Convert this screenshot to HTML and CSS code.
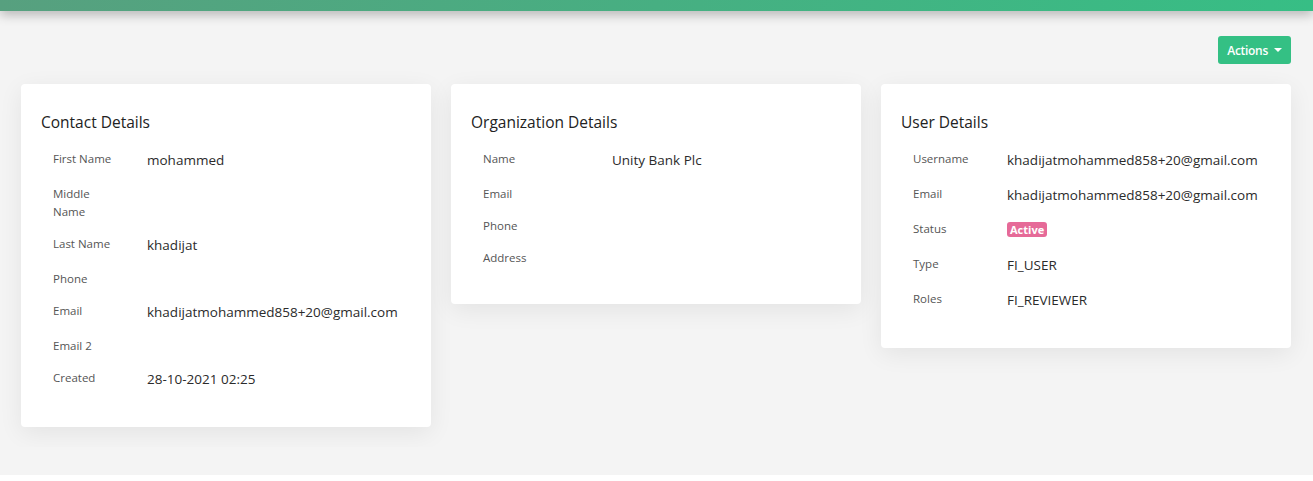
FILE: index.html
```html
<!DOCTYPE html>
<html lang="en">

<head>
    <meta charset="UTF-8" />
    <meta name="viewport" content="width=device-width, initial-scale=1.0" />
    <title>User | Details</title>
    <link rel="stylesheet" href="styles.css">
</head>

<body>

    <div class="topbar"></div>

    <div class="page">
        <div class="toolbar">
            <button class="btn-actions" type="button">Actions <span class="caret"></span></button>
        </div>

        <div class="cards">
            <div class="card">
                <h3>Contact Details</h3>
                <dl class="details">
                    <dt>First Name</dt>
                    <dd>mohammed</dd>
                    <dt>Middle Name</dt>
                    <dd class="empty"></dd>
                    <dt>Last Name</dt>
                    <dd>khadijat</dd>
                    <dt>Phone</dt>
                    <dd class="empty"></dd>
                    <dt>Email</dt>
                    <dd>khadijatmohammed858+20@gmail.com</dd>
                    <dt>Email 2</dt>
                    <dd class="empty"></dd>
                    <dt>Created</dt>
                    <dd>28-10-2021 02:25</dd>
                </dl>
            </div>

            <div class="card">
                <h3>Organization Details</h3>
                <dl class="details wide">
                    <dt>Name</dt>
                    <dd>Unity Bank Plc</dd>
                    <dt>Email</dt>
                    <dd class="empty"></dd>
                    <dt>Phone</dt>
                    <dd class="empty"></dd>
                    <dt>Address</dt>
                    <dd class="empty"></dd>
                </dl>
            </div>

            <div class="card">
                <h3>User Details</h3>
                <dl class="details">
                    <dt>Username</dt>
                    <dd>khadijatmohammed858+20@gmail.com</dd>
                    <dt>Email</dt>
                    <dd>khadijatmohammed858+20@gmail.com</dd>
                    <dt>Status</dt>
                    <dd><span class="badge">Active</span></dd>
                    <dt>Type</dt>
                    <dd>FI_USER</dd>
                    <dt>Roles</dt>
                    <dd>FI_REVIEWER</dd>
                </dl>
            </div>
        </div>
    </div>

</body>

</html>
```

FILE: styles.css
```css
* {
    box-sizing: border-box;
}

body {
    font-family: 'Open Sans', sans-serif;
    background-color: #fff;
    margin: 0;
    padding: 0;
    color: #333;
}

.topbar {
    height: 11px;
    background: linear-gradient(90deg, #57a07f, #37be85);
    box-shadow: 0 3px 12px rgba(0, 0, 0, 0.3);
    position: relative;
    z-index: 1;
}

.page {
    background-color: #f4f4f4;
    padding-top: 25px;
    padding-bottom: 28px;
}

.toolbar {
    display: flex;
    justify-content: flex-end;
    padding-right: 22px;
}

.btn-actions {
    height: 28px;
    padding: 0 9px;
    border: none;
    border-radius: 3px;
    background-color: #34c084;
    color: #fff;
    font-family: inherit;
    font-size: 12px;
    font-weight: 600;
    letter-spacing: -0.3px;
    display: flex;
    align-items: center;
    gap: 6px;
    cursor: pointer;
}

.caret {
    width: 0;
    height: 0;
    border-left: 4px solid transparent;
    border-right: 4px solid transparent;
    border-top: 4px solid #fff;
}

.cards {
    display: grid;
    grid-template-columns: repeat(3, 1fr);
    gap: 20px;
    align-items: start;
    padding: 20px 22px 20px 21px;
    overflow: hidden;
}

.card {
    background-color: #fff;
    border-radius: 4px;
    padding: 20px 20px 37px;
    box-shadow: 0 6px 24px rgba(0, 0, 0, 0.07);
}

.card h3 {
    margin: 6px 0 16px;
    font-size: 15.5px;
    line-height: 24px;
    font-weight: 400;
    color: #222;
}

.details {
    display: grid;
    grid-template-columns: 64px 1fr;
    column-gap: 30px;
    row-gap: 14px;
    margin: 0;
    padding-left: 12px;
}

.details.wide {
    grid-template-columns: 99px 1fr;
}

.details dt {
    font-size: 11.5px;
    line-height: 18px;
    color: #555;
}

.details dd {
    margin: 0;
    font-size: 13.5px;
    line-height: 21px;
    color: #2b2b2b;
}

.details dd.empty {
    line-height: 18px;
}

.badge {
    display: inline-block;
    background-color: #e66a98;
    color: #fff;
    font-size: 11px;
    font-weight: 700;
    line-height: 15px;
    padding: 0 3px;
    border-radius: 3px;
    vertical-align: 1px;
}
```
